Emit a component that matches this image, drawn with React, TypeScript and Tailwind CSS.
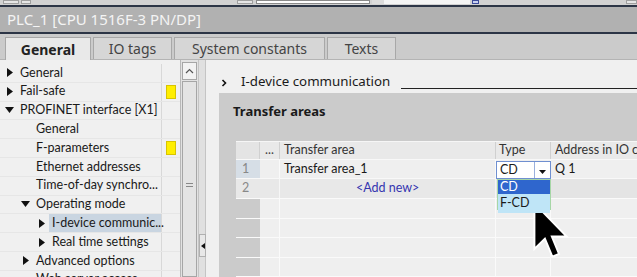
import React from "react";

const F = { fontFamily: '"Noto Sans", "Open Sans", sans-serif' };
const L = { fontFamily: 'Lato, "Noto Sans", sans-serif' };

function Tri({ open }: { open?: boolean }) {
  return open ? (
    <svg width="9" height="6" viewBox="0 0 9 6" className="shrink-0">
      <polygon points="0,0 9,0 4.5,6" fill="#111" />
    </svg>
  ) : (
    <svg width="6" height="9" viewBox="0 0 6 9" className="shrink-0">
      <polygon points="0,0 6,4.5 0,9" fill="#111" />
    </svg>
  );
}

type Row = { label: string; indent: number; tri?: "open" | "closed"; warn?: boolean; sel?: boolean };

const rows: Row[] = [
  { label: "General", indent: 0, tri: "closed" },
  { label: "Fail-safe", indent: 0, tri: "closed", warn: true },
  { label: "PROFINET interface [X1]", indent: 0, tri: "open" },
  { label: "General", indent: 1 },
  { label: "F-parameters", indent: 1, warn: true },
  { label: "Ethernet addresses", indent: 1 },
  { label: "Time-of-day synchro...", indent: 1 },
  { label: "Operating mode", indent: 1, tri: "open" },
  { label: "I-device communic...", indent: 2, tri: "closed", sel: true },
  { label: "Real time settings", indent: 2, tri: "closed" },
  { label: "Advanced options", indent: 1, tri: "closed" },
  { label: "Web server access", indent: 1 },
];

function TreeRow({ r }: { r: Row }) {
  const textX = r.indent === 0 ? 20 : r.indent === 1 ? 36 : 52;
  const triX = textX - 15;
  return (
    <div className="flex h-[18.8px] border-b border-[#e6e6e6] shrink-0">
      <div className="relative w-[162px] shrink-0 border-r border-[#d8d8d8] flex items-center">
        {r.sel && <div className="absolute left-[49px] right-0 top-0 bottom-0 bg-[#c9d5e1]" />}
        {r.tri && (
          <div className="absolute flex items-center justify-center w-[9px] h-[9px]" style={{ left: triX }}>
            <Tri open={r.tri === "open"} />
          </div>
        )}
        <span className="absolute text-[12.5px] text-[#1a1a1a] whitespace-nowrap leading-none" style={{ ...L, left: textX }}>
          {r.label}
        </span>
      </div>
      <div className="w-[18px] shrink-0 flex items-center justify-start pl-[4px]">
        {r.warn && <div className="w-[10px] h-[14px] bg-[#ffee00] border border-[#d8c400]" />}
      </div>
    </div>
  );
}

function Cursor() {
  return (
    <svg width="36" height="58" viewBox="0 0 13 21" className="absolute" style={{ left: 533, top: 202 }}>
      <polygon
        points="0.5,0.5 0.5,17 4.3,13.3 7,19.8 9.4,18.8 6.8,12.5 12.2,12.5"
        fill="#000"
        stroke="#fff"
        strokeWidth="0.7"
        strokeLinejoin="miter"
      />
    </svg>
  );
}

export default function App() {
  return (
    <div className="relative w-[637px] h-[277px] overflow-hidden bg-[#efefef] flex flex-col" style={F}>
      {/* toolbar strip */}
      <div className="h-[5px] bg-[#d2d2d2] flex shrink-0 relative">
        <div className="absolute left-[3px] top-0 w-[16px] h-[4px] border border-[#a0a0a0] bg-[#e6e6e6]" />
        <div className="absolute left-[21px] top-0 w-[10px] h-[4px] border border-[#a0a0a0] bg-[#e6e6e6]" />
        <div className="absolute left-[237px] top-0 w-[16px] h-[4px] border border-[#a0a0a0] bg-[#e6e6e6]" />
        <div className="absolute left-[256px] top-0 w-[114px] h-[4px] border border-[#8a8a8a] bg-white" />
        <div className="absolute left-[372px] top-0 w-[12px] h-[4px] bg-[#dcdcdc]" />
        <div className="absolute left-[384px] top-0 w-[86px] h-[4px] bg-[#f4f4f4]" />
        <div className="absolute left-[472px] top-0 w-[7px] h-[4px] border border-[#3b4a9a] bg-[#c8d0f0]" />
        <div className="absolute left-[626px] top-0 w-[11px] h-[4px] border border-[#a0a0a0] bg-[#e6e6e6]" />
      </div>
      <div className="h-[2px] bg-[#2c3546] shrink-0" />
      {/* title bar */}
      <div className="h-[25px] bg-[#b1b1b1] flex items-center pl-[7px] shrink-0">
        <span className="text-[15px] text-[#f4f4f4] leading-none">PLC_1 [CPU 1516F-3 PN/DP]</span>
      </div>
      <div className="h-[2px] bg-[#2c3546] shrink-0" />
      {/* tabs */}
      <div className="h-[26px] bg-[#cbcbcb] flex items-end pl-[5px] gap-[2px] shrink-0 border-b border-[#b4b4b4]">
        <div className="w-[86px] h-[23px] bg-[#e9e9e9] border border-b-0 border-[#a8a8a8] flex items-center justify-center text-[14px] font-bold text-[#222] -mb-px">
          General
        </div>
        <div className="w-[79px] h-[22px] bg-[#d6d6d6] border border-b-0 border-[#a8a8a8] flex items-center justify-center text-[14px] text-[#444]">
          IO tags
        </div>
        <div className="w-[151px] h-[22px] bg-[#d6d6d6] border border-b-0 border-[#a8a8a8] flex items-center justify-center text-[14px] text-[#444]">
          System constants
        </div>
        <div className="w-[69px] h-[22px] bg-[#d6d6d6] border border-b-0 border-[#a8a8a8] flex items-center justify-center text-[14px] text-[#444]">
          Texts
        </div>
      </div>
      {/* body */}
      <div className="flex flex-1 min-h-0">
        {/* tree */}
        <div className="w-[180px] shrink-0 bg-[#f0f0f0] flex flex-col pt-[4px] overflow-hidden">
          {rows.map((r, i) => (
            <TreeRow key={i} r={r} />
          ))}
        </div>
        {/* scrollbar */}
        <div className="w-[18px] shrink-0 bg-[#e2e2e2] flex flex-col border-l border-[#b8b8b8] pt-[2px]">
          <div className="h-[18px] mx-[1px] border border-[#a6a6a6] bg-[#f2f2f2] flex items-center justify-center">
            <svg width="9" height="6" viewBox="0 0 9 6">
              <polyline points="1,5 4.5,1.5 8,5" fill="none" stroke="#555" strokeWidth="1.2" />
            </svg>
          </div>
          <div className="flex-1 mt-[1px] mx-[1px] border border-[#a6a6a6] bg-[#e4e4e4] flex flex-col items-center pt-[101px]">
            <div className="w-[7px] h-[1px] bg-[#888]" />
            <div className="w-[7px] h-[1px] bg-[#888] mt-[2px]" />
          </div>
        </div>
        {/* splitter */}
        <div className="w-[8px] shrink-0 bg-[#e0e0e0] border-l border-[#c4c4c4] flex flex-col">
          <div className="h-[174px] border-r border-[#c4c4c4]" />
          <div className="h-[23px] border border-[#b0b0b0] bg-[#e8e8e8] flex items-center justify-center">
            <svg width="4" height="6" viewBox="0 0 4 6">
              <polygon points="4,0 0,3 4,6" fill="#111" />
            </svg>
          </div>
          <div className="flex-1 border-r border-[#c4c4c4]" />
        </div>
        {/* content */}
        <div className="flex-1 min-w-0 overflow-hidden bg-[#f0f0f0] flex flex-col">
          <div className="h-[33px] pt-[11px] flex items-center pl-[15px] shrink-0">
            <svg width="6" height="8" viewBox="0 0 6 8" className="mt-[1px] shrink-0">
              <polyline points="1.5,1 4.5,4 1.5,7" fill="none" stroke="#111" strokeWidth="1.6" />
            </svg>
            <span className="ml-[14px] text-[13.3px] text-[#1a1a1a] leading-none whitespace-nowrap">I-device communication</span>
            <div className="flex-1 ml-[11px] mt-[12px] h-[1px] bg-[#222]" />
          </div>
          <div className="flex-1 ml-[13px] bg-[#cbcbcb] flex flex-col">
            <div className="h-[37px] flex items-center pl-[14px] shrink-0">
              <span className="text-[13px] font-bold text-[#1a1a1a]">Transfer areas</span>
            </div>
            <div className="h-[11px] shrink-0" />
            {/* table */}
            <div className="ml-[17px] flex flex-col text-[12.5px] text-[#1a1a1a]" style={L}>
              {/* header */}
              <div className="flex h-[18px] border-t border-[#f6f6f6]">
                <div className="w-[24px] shrink-0 bg-[#e4e4e4] border-r border-[#d0d0d0]" />
                <div className="w-[20px] shrink-0 bg-[#e9e9e9] border-r border-[#d0d0d0] flex items-center justify-center text-[#444]">...</div>
                <div className="w-[216px] shrink-0 bg-[#e9e9e9] border-r border-[#d0d0d0] flex items-center pl-[4px] text-[#333]">Transfer area</div>
                <div className="w-[55px] shrink-0 bg-[#e9e9e9] border-r border-[#d0d0d0] flex items-center pl-[3px] text-[#333]">Type</div>
                <div className="flex-1 bg-[#e9e9e9] flex items-center pl-[4px] text-[#333] whitespace-nowrap overflow-hidden">Address in IO co</div>
              </div>
              {/* row 1 */}
              <div className="flex h-[19px] border-t border-[#f8f8f8]">
                <div className="w-[24px] shrink-0 bg-[#d6dee6] flex items-center pl-[6px] text-[#888]">1</div>
                <div className="w-[20px] shrink-0 bg-[#efefef] border-r border-[#fafafa]" />
                <div className="w-[216px] shrink-0 bg-[#efefef] border-r border-[#fafafa] flex items-center pl-[4px]">Transfer area_1</div>
                <div className="relative w-[55px] shrink-0 bg-[#efefef] border-r border-[#fafafa]">
                  <div className="absolute left-0 top-[1px] w-[55px] h-[18px] bg-white border border-[#6f8fd0] flex">
                    <div className="flex-1 flex items-center pl-[3px]">CD</div>
                    <div className="w-[16px] border-l border-[#9ab0dd] flex items-center justify-center">
                      <svg width="7" height="4" viewBox="0 0 7 4" className="mt-[3px]">
                        <polygon points="0,0 7,0 3.5,4" fill="#111" />
                      </svg>
                    </div>
                  </div>
                  <div className="absolute z-10 left-[1px] top-[19px] w-[54px] h-[31px] border border-[#a6d6a6] flex flex-col">
                    <div className="h-[14px] bg-[#2f66cd] text-white flex items-center pl-[2px]">CD</div>
                    <div className="flex-1 bg-[#bfe5f7] text-[#1a1a1a] flex items-center pl-[2px]">F-CD</div>
                  </div>
                </div>
                <div className="flex-1 bg-[#efefef] flex items-center pl-[4px] whitespace-nowrap">Q 1</div>
              </div>
              {/* row 2 */}
              <div className="flex h-[20px] border-t border-[#f8f8f8]">
                <div className="w-[24px] shrink-0 bg-[#e8e8e8] flex items-center pl-[6px] text-[#888]">2</div>
                <div className="w-[20px] shrink-0 bg-[#e8e8e8] border-r border-[#f6f6f6]" />
                <div className="w-[216px] shrink-0 bg-[#e8e8e8] border-r border-[#f6f6f6] flex items-center pl-[76px] text-[#3535b0]">&lt;Add new&gt;</div>
                <div className="w-[55px] shrink-0 bg-[#e8e8e8] border-r border-[#f6f6f6]" />
                <div className="flex-1 bg-[#e4e4e4]" />
              </div>
              {[0, 1, 2, 3, 4].map((i) => (
                <div key={i} className="flex h-[19.5px] border-t border-[#fafafa]">
                  <div className="w-[24px] shrink-0 bg-[#cbcbcb]" />
                  <div className="w-[20px] shrink-0 bg-[#efefef] border-r border-[#fafafa]" />
                  <div className="w-[216px] shrink-0 bg-[#efefef] border-r border-[#fafafa]" />
                  <div className="w-[55px] shrink-0 bg-[#efefef] border-r border-[#fafafa]" />
                  <div className="flex-1 bg-[#efefef]" />
                </div>
              ))}
            </div>
          </div>
        </div>
      </div>
      <Cursor />
    </div>
  );
}
